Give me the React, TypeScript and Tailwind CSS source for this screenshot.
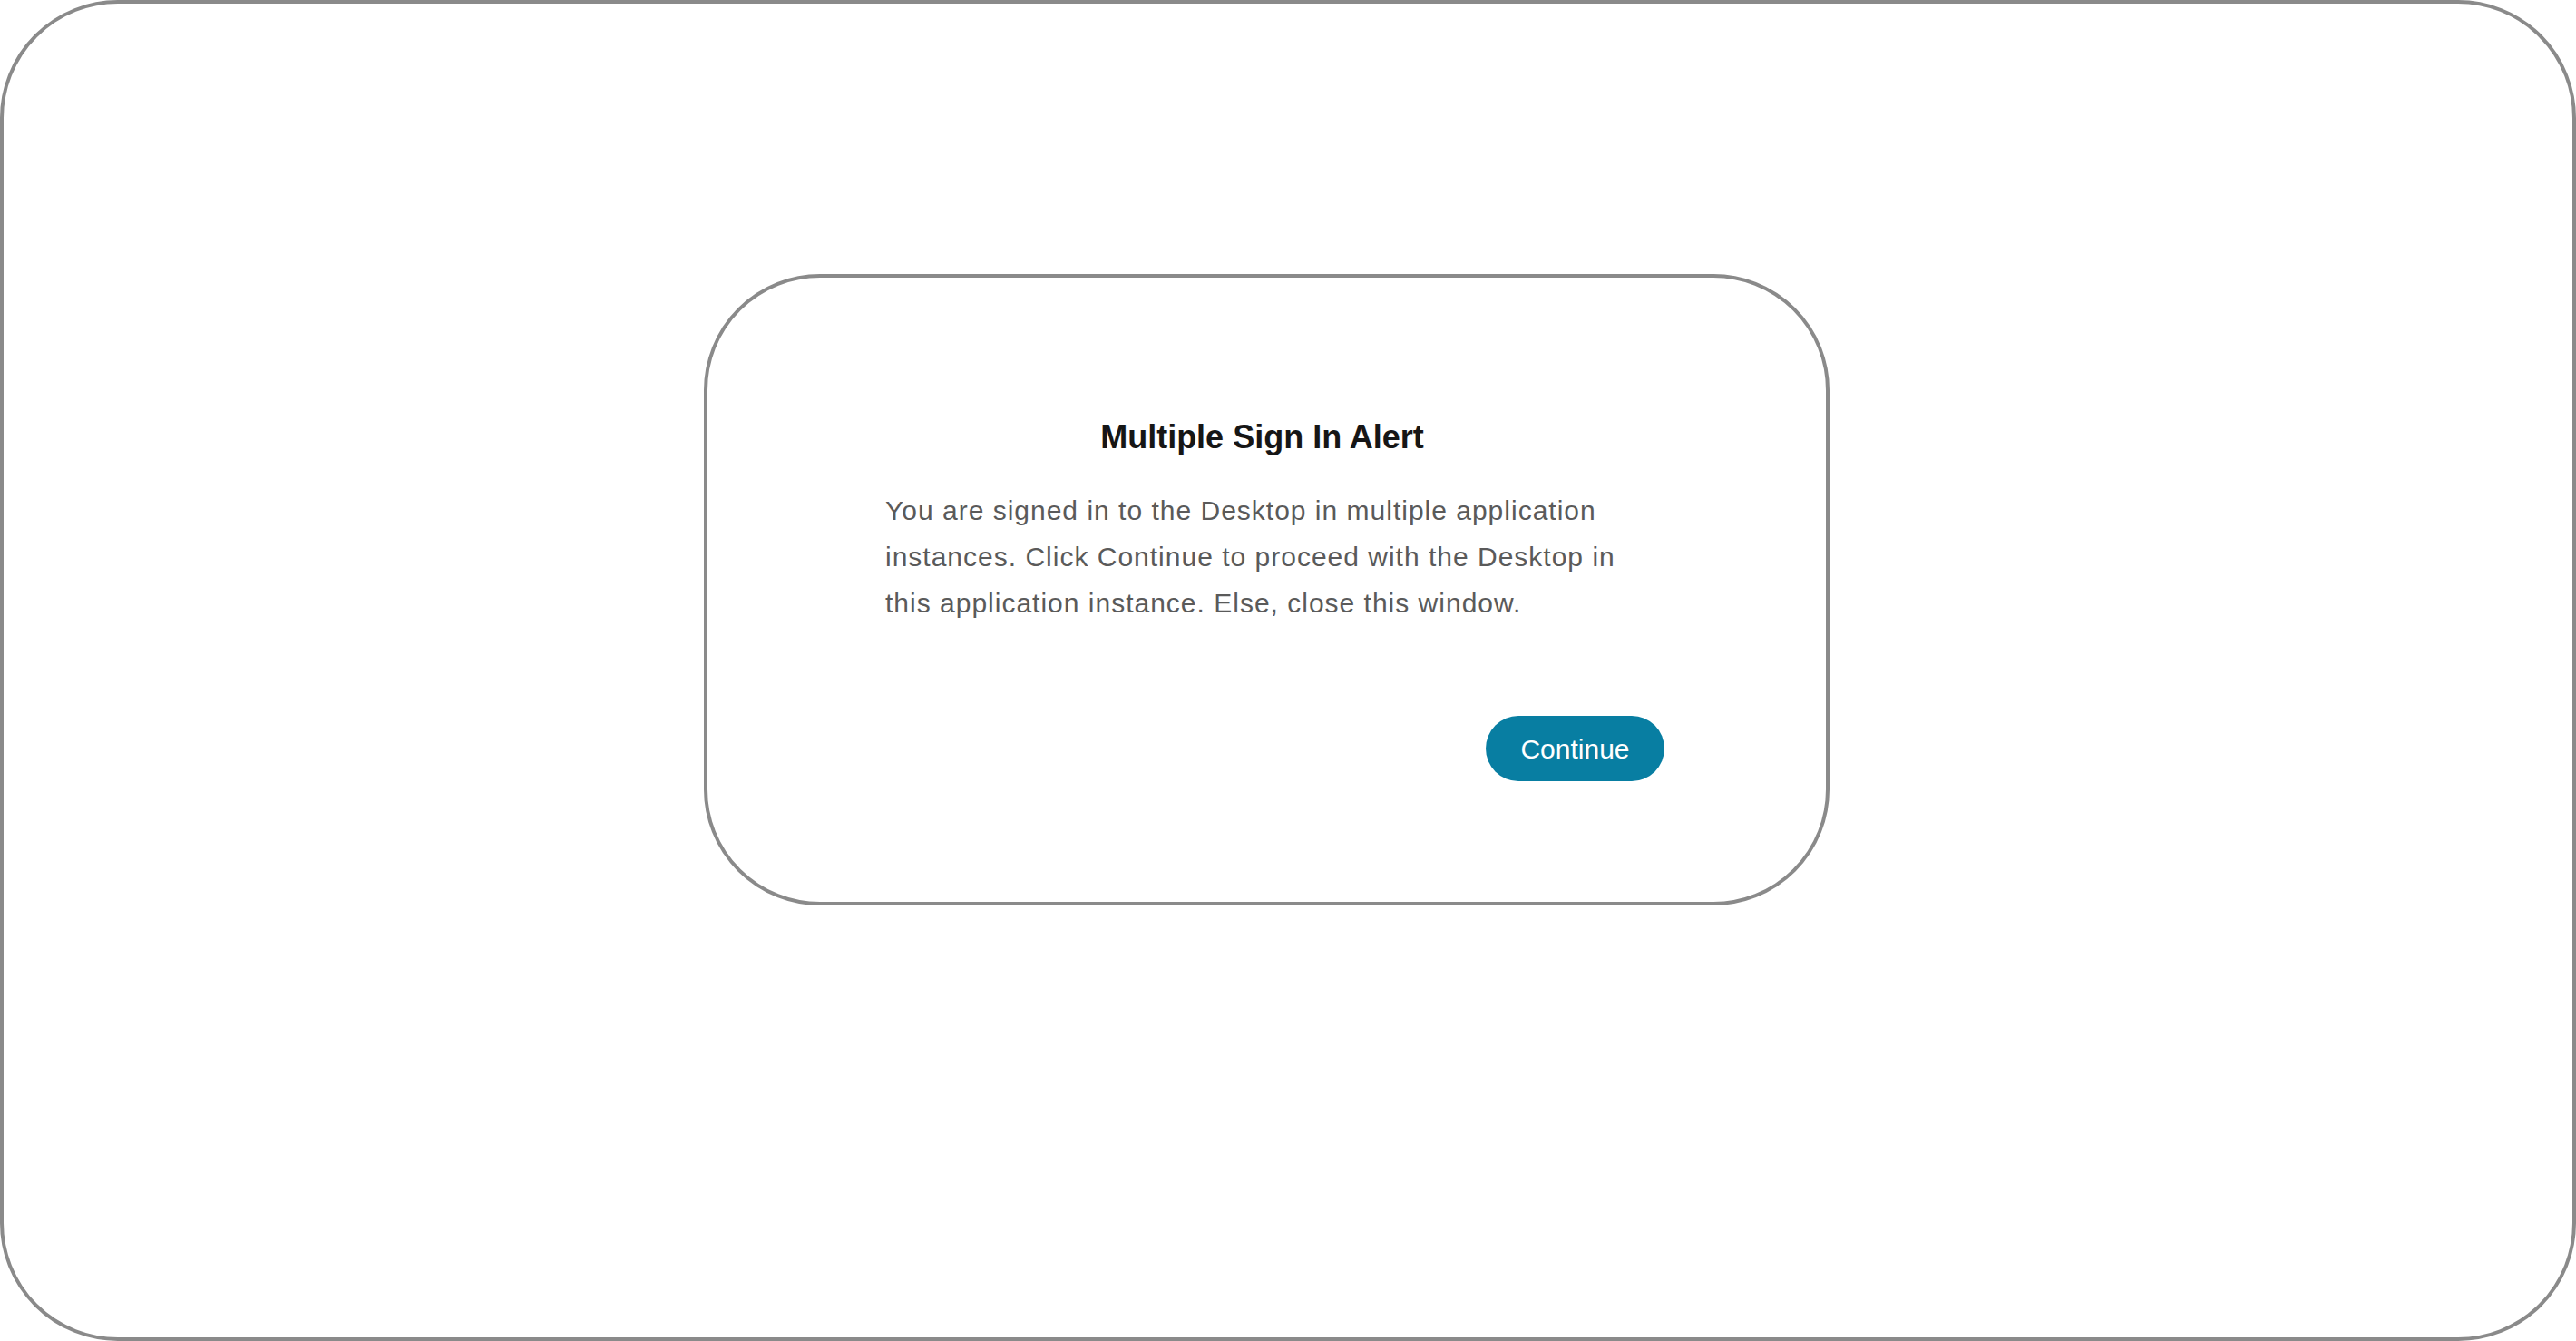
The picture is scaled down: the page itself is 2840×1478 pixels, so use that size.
export default function App() {
  return (
    <div className="h-screen w-full bg-white font-['Liberation_Sans',Arial,sans-serif]">
      <div className="h-full w-full rounded-[130px] border-4 border-[#8a8a8a] pl-[772px] pt-[298px]">
        <div className="w-[1241px] rounded-[128px] border-4 border-[#8a8a8a] bg-white pt-[155px] pb-[133px]">
          <h1 className="pr-[10px] text-center text-[36px] leading-[42px] font-bold text-[#161616]">
            Multiple Sign In Alert
          </h1>
          <div className="mt-[34px] pl-[196px] pr-[178px]">
            <p className="text-[30px] leading-[51px] tracking-[1px] text-[#5a5a5a]">
              <span className="block">You are signed in to the Desktop in multiple application</span>
              <span className="block">instances. Click Continue to proceed with the Desktop in</span>
              <span className="block">this application instance. Else, close this window.</span>
            </p>
            <div className="mt-[99px] flex justify-end">
              <button className="h-[72px] w-[197px] rounded-full bg-[#087ea2] text-[30px] text-white">
                Continue
              </button>
            </div>
          </div>
        </div>
      </div>
    </div>
  );
}
